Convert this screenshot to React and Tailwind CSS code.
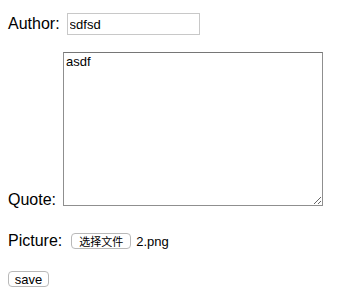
import React from "react";

export default function App() {
  return (
    <div
      className="w-[349px] h-[295px] bg-white text-black px-2 pt-[13px]"
      style={{ fontFamily: '"Liberation Sans", Arial, sans-serif' }}
    >
      <div className="flex items-center h-[22px]">
        <span className="text-[16px] leading-none">Author:</span>
        <input
          type="text"
          defaultValue="sdfsd"
          className="ml-[7px] w-[133px] h-[22px] border border-[#c8c8c8] px-[2px] text-[13px] leading-[16px] outline-none bg-white"
          style={{ fontFamily: '"Liberation Sans", Arial, sans-serif' }}
        />
      </div>

      <div className="flex items-end mt-[17px]">
        <span className="text-[16px] leading-[12px]">Quote:</span>
        <textarea
          defaultValue="asdf"
          className="ml-[7px] w-[260px] h-[154px] border border-[#8f8f8f] border-t-[#767676] px-[2px] py-[1px] text-[13px] leading-[15px] outline-none bg-white"
          style={{ fontFamily: '"Liberation Sans", Arial, sans-serif', resize: "both" }}
        />
      </div>

      <div className="flex items-center mt-[27px] h-[16px]">
        <span className="text-[16px] leading-none">Picture:</span>
        <button
          type="button"
          className="ml-[9px] h-[16px] w-[60px] flex items-center justify-center border border-[#b9b9b9] rounded-[4px] bg-white text-[11px] leading-none"
          style={{ fontFamily: '"Noto Sans CJK SC", sans-serif' }}
        >
          选择文件
        </button>
        <span className="ml-[5px] text-[13px] leading-none">2.png</span>
      </div>

      <div className="flex mt-[22px]">
        <button
          type="button"
          className="h-[16px] w-[41px] flex items-center justify-center border border-[#b9b9b9] rounded-[4px] bg-white text-[13px] leading-none"
          style={{ fontFamily: '"Liberation Sans", Arial, sans-serif' }}
        >
          save
        </button>
      </div>
    </div>
  );
}
